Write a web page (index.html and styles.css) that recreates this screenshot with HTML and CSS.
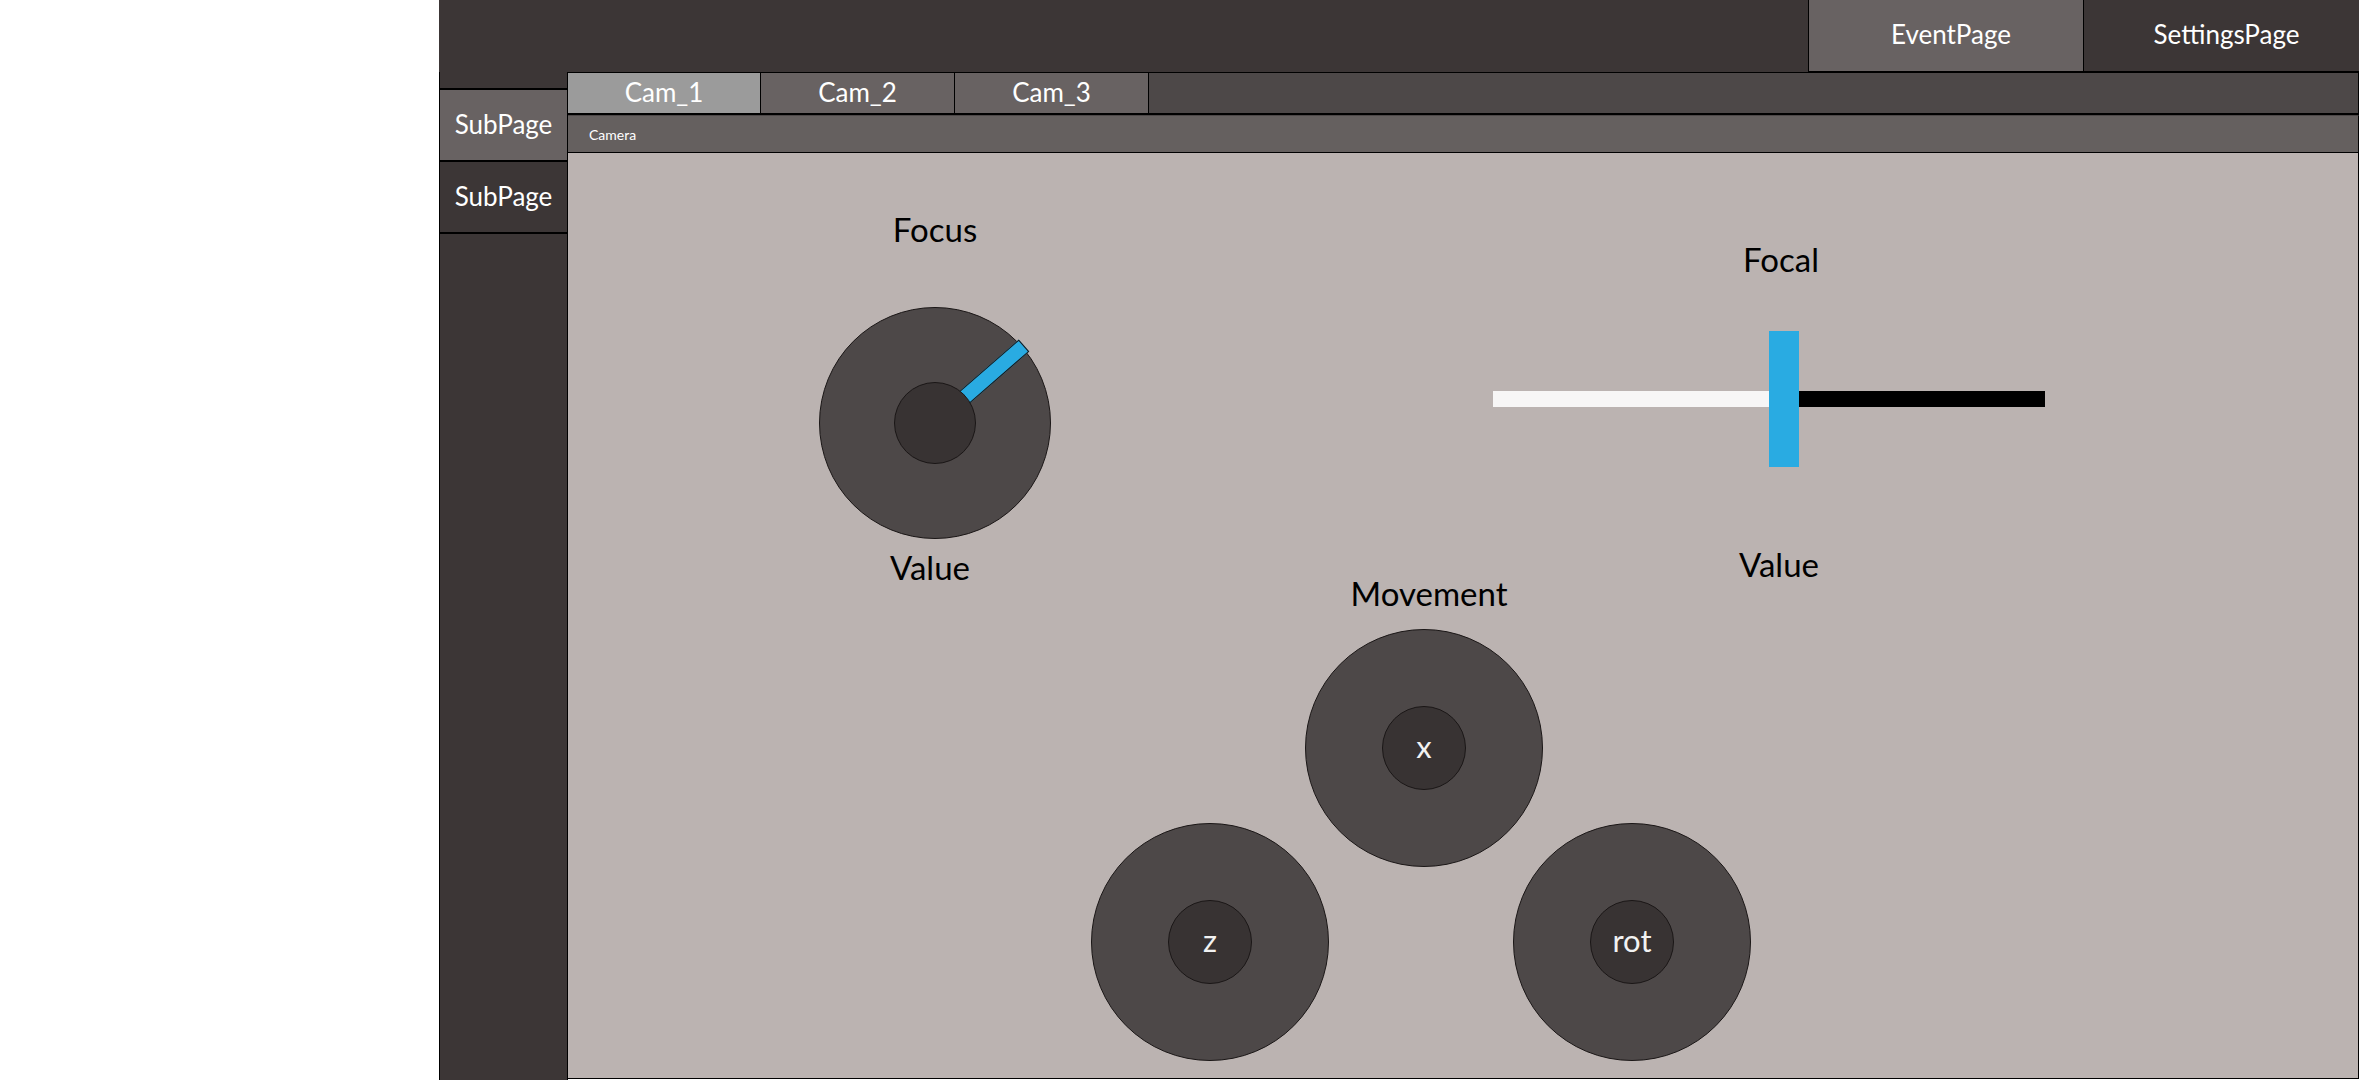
FILE: index.html
```html
<!DOCTYPE html>
<html lang="en">
<head>
<meta charset="utf-8">
<title>Camera Control</title>
<link rel="stylesheet" href="styles.css">
</head>
<body>
<div class="app">
  <header class="topbar">
    <div class="nav-btn nav-active">EventPage</div>
    <div class="nav-btn">SettingsPage</div>
  </header>
  <div class="main">
    <aside class="sidebar">
      <ul class="side-list">
        <li class="side-item side-active">SubPage</li>
        <li class="side-item">SubPage</li>
      </ul>
    </aside>
    <section class="panel">
      <div class="tabs">
        <div class="tab tab-active">Cam_1</div>
        <div class="tab">Cam_2</div>
        <div class="tab">Cam_3</div>
      </div>
      <div class="panel-head">Camera</div>
      <div class="content">
        <div class="row-top">
          <div class="focus-col">
            <div class="title">Focus</div>
            <div class="knob">
              <div class="knob-bar"></div>
              <div class="knob-center"></div>
            </div>
            <div class="value value-focus">Value</div>
          </div>
          <div class="focal-col">
            <div class="title">Focal</div>
            <div class="slider">
              <div class="track-fill"></div>
              <div class="handle"></div>
              <div class="track-rest"></div>
            </div>
            <div class="value value-focal">Value</div>
          </div>
        </div>
        <div class="movement">
          <div class="title move-title">Movement</div>
          <div class="joy joy-x"><div class="joy-center">x</div></div>
          <div class="joy-row">
            <div class="joy"><div class="joy-center">z</div></div>
            <div class="joy"><div class="joy-center">rot</div></div>
          </div>
        </div>
      </div>
    </section>
  </div>
</div>
</body>
</html>
```
FILE: styles.css
```css
* { box-sizing: border-box; }
html, body { margin: 0; padding: 0; background: #ffffff; }
body { font-family: Lato, "Open Sans", sans-serif; }

.app {
  margin-left: 439px;
  width: 1920px;
  height: 1080px;
  display: flex;
  flex-direction: column;
  overflow: hidden;
}

/* top bar */
.topbar {
  height: 72px;
  flex: 0 0 72px;
  background: #3c3636;
  display: flex;
  justify-content: flex-end;
}
.nav-btn {
  width: 276px;
  height: 72px;
  padding-left: 10px;
  border-left: 1px solid #000;
  border-bottom: 1px solid #000;
  color: #ffffff;
  font-size: 26px;
  line-height: 68px;
  text-align: center;
  background: #3c3636;
}
.nav-active { width: 275px; background: #686262; }

/* main */
.main {
  flex: 1;
  display: flex;
  min-height: 0;
}
.sidebar {
  width: 128px;
  flex: 0 0 128px;
  background: #3c3636;
  border-left: 1px solid #000;
  padding-top: 16px;
}
.side-list {
  list-style: none;
  margin: 0;
  padding: 0;
  border-top: 2px solid #000;
}
.side-item {
  height: 72px;
  border-bottom: 2px solid #000;
  color: #ffffff;
  font-size: 26px;
  line-height: 68px;
  text-align: center;
}
.side-active { background: #686262; }

.panel {
  flex: 1;
  display: flex;
  flex-direction: column;
  border-left: 1px solid #000;
  min-width: 0;
}
.tabs {
  height: 43px;
  flex: 0 0 43px;
  display: flex;
  background: #4d4848;
  border-top: 1px solid #000;
  border-bottom: 2px solid #000;
  border-right: 1px solid #000;
}
.tab {
  width: 194px;
  height: 40px;
  background: #686262;
  border-right: 1px solid #000;
  color: #ffffff;
  font-size: 26px;
  line-height: 38px;
  text-align: center;
}
.tab:first-child { width: 193px; }
.tab-active { background: #9b9b9b; }

.panel-head {
  height: 38px;
  flex: 0 0 38px;
  background: #65605f;
  border-top: 1px solid #4d4848;
  border-bottom: 1px solid #000;
  border-right: 1px solid #000;
  color: #ffffff;
  font-size: 14px;
  line-height: 37px;
  padding-left: 21px;
}

.content {
  flex: 1;
  background: #bbb3b1;
  border-right: 1px solid #000;
  border-bottom: 1px solid #000;
  margin-bottom: 1px;
  display: flex;
  flex-direction: column;
}

.title, .value {
  color: #000;
  font-size: 33px;
}
.title { line-height: 40px; }
.value { line-height: 28px; }

.row-top {
  height: 428px;
  flex: 0 0 428px;
  display: flex;
}
.focus-col {
  width: 734px;
  display: flex;
  flex-direction: column;
  align-items: center;
  padding-top: 56px;
}
.knob {
  position: relative;
  margin-top: 58px;
  width: 232px;
  height: 232px;
  border-radius: 50%;
  background: #4d4848;
  border: 1px solid #1a1616;
}
.knob-bar {
  position: absolute;
  left: 50%;
  top: calc(50% - 8px);
  width: 118px;
  height: 16px;
  background: #29abe2;
  border: 1px solid #1a1616;
  transform-origin: 0 50%;
  transform: rotate(-41deg);
}
.knob-center {
  position: absolute;
  left: 50%;
  top: 50%;
  width: 82px;
  height: 82px;
  margin: -41px 0 0 -41px;
  border-radius: 50%;
  background: #383333;
  border: 1px solid #1a1616;
}
.value-focus { margin-top: 14px; margin-right: 10px; }

.focal-col {
  width: 958px;
  display: flex;
  flex-direction: column;
  align-items: center;
  padding-top: 86px;
}
.slider {
  margin-top: 52px;
  margin-right: 24px;
  width: 552px;
  height: 136px;
  display: flex;
  align-items: center;
}
.track-fill { width: 276px; height: 16px; background: #f7f6f6; }
.handle { width: 30px; height: 136px; background: #29abe2; }
.track-rest { width: 246px; height: 16px; background: #000; }
.value-focal { margin-top: 83px; margin-right: 4px; }

.movement {
  margin-left: 523px;
  width: 660px;
  display: flex;
  flex-direction: column;
  align-items: center;
}
.move-title {
  line-height: 24px;
  padding-left: 16px;
}
.joy {
  position: relative;
  width: 238px;
  height: 238px;
  border-radius: 50%;
  background: #4d4848;
  border: 1px solid #1a1616;
  display: flex;
  align-items: center;
  justify-content: center;
}
.joy-x { margin-top: 24px; margin-left: 6px; }
.joy-center {
  width: 84px;
  height: 84px;
  border-radius: 50%;
  background: #383333;
  border: 1px solid #1a1616;
  color: #f2f2f2;
  font-size: 31px;
  line-height: 78px;
  text-align: center;
}
.joy-row {
  margin-top: -44px;
  width: 660px;
  display: flex;
  justify-content: space-between;
}
```
